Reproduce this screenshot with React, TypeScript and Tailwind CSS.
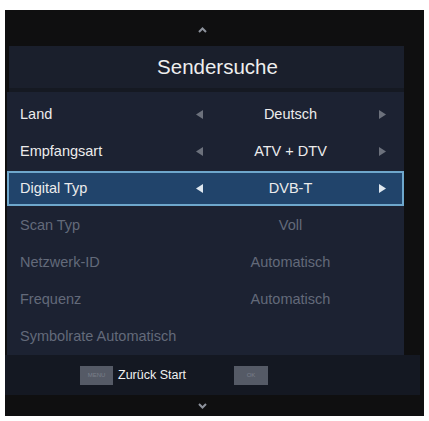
import React from "react";

const font = { fontFamily: '"Liberation Sans", Arial, sans-serif' };

type Row = { label: string; value?: string; arrows?: boolean; active?: boolean; disabled?: boolean };

const rows: Row[] = [
  { label: "Land", value: "Deutsch", arrows: true },
  { label: "Empfangsart", value: "ATV + DTV", arrows: true },
  { label: "Digital Typ", value: "DVB-T", arrows: true, active: true },
  { label: "Scan Typ", value: "Voll", disabled: true },
  { label: "Netzwerk-ID", value: "Automatisch", disabled: true },
  { label: "Frequenz", value: "Automatisch", disabled: true },
  { label: "Symbolrate Automatisch", disabled: true },
];

function Tri({ dir, color }: { dir: "l" | "r"; color: string }) {
  return (
    <svg width="7" height="9" viewBox="0 0 7 9">
      {dir === "l" ? <polygon points="7,0 7,9 0,4.5" fill={color} /> : <polygon points="0,0 0,9 7,4.5" fill={color} />}
    </svg>
  );
}

function Chevron({ up }: { up?: boolean }) {
  return (
    <svg width="9" height="6" viewBox="0 0 9 6">
      <polyline
        points={up ? "1,5 4.5,1.5 8,5" : "1,1 4.5,4.5 8,1"}
        fill="none"
        stroke="#8d929c"
        strokeWidth="2"
      />
    </svg>
  );
}

export default function App() {
  return (
    <div className="w-[429px] h-[421px] bg-white pt-[10px] pl-[5px]" style={font}>
      <div className="w-[419px] h-[406px] bg-[#0f0f10] flex flex-col">
        <div className="h-[36px] flex items-center pl-[193px] pt-[4px]">
          <Chevron up />
        </div>
        <div className="flex">
          <div className="w-[399px] pl-[4px] flex flex-col">
            <div className="h-[42px] bg-[#1a1f2c] flex items-center justify-center pl-[22px] text-[20.5px] text-[#eeeeee]">
              Sendersuche
            </div>
            <div className="h-[4px] bg-[#151922]" />
            <div className="h-[263px] bg-[#1c2232] pt-[4px] -ml-[2px]">
              {rows.map((r) => (
                <div key={r.label} className="h-[37px] flex items-center">
                  <div
                    className={
                      "w-[398px] flex items-center text-[14.5px] " +
                      (r.active
                        ? "h-[35px] bg-[#21446b] border-2 border-[#6ea7cc] pl-[11px]"
                        : "h-[35px] pl-[13px]")
                    }
                  >
                    <div
                      className={
                        "w-[173px] whitespace-nowrap " +
                        (r.disabled ? "text-[#636a7a]" : "text-[#ececec]")
                      }
                    >
                      {r.label}
                    </div>
                    <div className="w-[12px] flex justify-center">
                      {r.arrows && <Tri dir="l" color={r.active ? "#dfe8f0" : "#6c717c"} />}
                    </div>
                    <div
                      className={
                        "w-[171px] text-center " +
                        (r.disabled ? "text-[#636a7a]" : "text-[#ececec]")
                      }
                    >
                      {r.value}
                    </div>
                    <div className="w-[12px] flex justify-center">
                      {r.arrows && <Tri dir="r" color={r.active ? "#dfe8f0" : "#6c717c"} />}
                    </div>
                  </div>
                </div>
              ))}
            </div>
          </div>
          <div className="flex-1" />
        </div>
        <div className="h-[40px] bg-[#141822] w-[415px] flex items-center pl-[75px] pt-[1px]">
          <div className="w-[33px] h-[19px] bg-[#555a66] flex items-center justify-center text-[6px] text-[#7a7f8a]">
            MENU
          </div>
          <div className="ml-[5px] text-[12.5px] text-[#f0f0f0] w-[116px]">Zurück Start</div>
          <div className="w-[34px] h-[19px] bg-[#555a66] flex items-center justify-center text-[6px] text-[#7a7f8a]">
            OK
          </div>
        </div>
        <div className="flex-1 flex items-center pl-[193px]">
          <Chevron />
        </div>
      </div>
    </div>
  );
}
